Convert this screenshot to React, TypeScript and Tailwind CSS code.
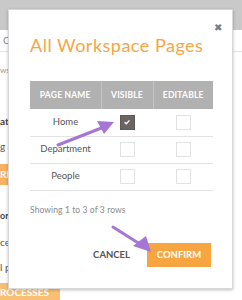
import React from "react";

const rows = [
  { name: "Home", visible: true, editable: false },
  { name: "Department", visible: false, editable: false },
  { name: "People", visible: false, editable: false },
];

function Box({ checked }: { checked: boolean }) {
  return checked ? (
    <span className="flex h-[15px] w-[15px] items-center justify-center border border-[#5f5856] bg-[#6b6462]">
      <svg viewBox="0 0 10 10" className="h-[8px] w-[8px]">
        <path d="M2 5.2 L4.2 7.2 L8 3" fill="none" stroke="#fff" strokeWidth="1.6" />
      </svg>
    </span>
  ) : (
    <span className="block h-[15px] w-[15px] border border-[#e2e2e2] bg-white" />
  );
}

export default function App() {
  return (
    <div
      className="relative h-[300px] w-[242px] overflow-hidden bg-white"
      style={{ fontFamily: "Lato, 'Open Sans', sans-serif" }}
    >
      {/* page behind the dialog */}
      <div className="h-[30px] w-full bg-[#c9c9c9]" />
      <div className="flex h-[22px] items-center border-b border-[#e4e4e4] pl-[3px] text-[10px] text-[#888]">C</div>
      <div className="mt-[12px] text-[8px] text-[#999]">ws</div>
      <div className="mt-[38px] text-[10px] font-bold text-[#444]">ati</div>
      <div className="mt-[10px] text-[10px] text-[#555]">g a</div>
      <div className="mt-[10px] flex h-[21px] w-[40px] items-center bg-[#f7b160] text-[10px] font-bold text-white">RE</div>
      <div className="mt-[24px] text-[9px] font-bold text-[#444]">or</div>
      <div className="mt-[12px] text-[10px] text-[#555]">ce</div>
      <div className="mt-[10px] text-[10px] text-[#555]">l p</div>
      <div className="mt-[8px] flex h-[20px] w-[60px] items-center bg-[#f9bf74] text-[10px] font-bold text-white">ROCESSES</div>

      {/* dialog */}
      <div className="absolute left-[8px] top-[9px] flex h-[280px] w-[225px] flex-col border border-[#d8d8d8] bg-white px-[21px] shadow-[0_1px_3px_rgba(0,0,0,0.25)]">
        <div className="flex justify-end pt-[12px]">
          <span className="mr-[-11px] text-[10px] leading-none text-[#7a7a7a]">✖</span>
        </div>
        <h2 className="mt-[2px] whitespace-nowrap text-[18px] leading-[22px] tracking-[0.5px] text-[#f5a545]">
          All Workspace Pages
        </h2>

        <table className="mt-[25px] w-[183px] border-collapse text-[9.5px] text-[#555]">
          <thead>
            <tr className="h-[28px] bg-[#b1b1b1] text-[8.5px] font-bold tracking-[0.2px] text-white">
              <th className="w-[71px] border-r border-[#c4c4c4] font-bold">PAGE NAME</th>
              <th className="w-[52px] border-r border-[#c4c4c4] font-bold">VISIBLE</th>
              <th className="font-bold">EDITABLE</th>
            </tr>
          </thead>
          <tbody>
            {rows.map((r) => (
              <tr key={r.name} className="h-[27px] border-b border-[#e3e3e3]">
                <td className="text-center">{r.name}</td>
                <td>
                  <div className="flex justify-center">
                    <Box checked={r.visible} />
                  </div>
                </td>
                <td>
                  <div className="flex justify-center">
                    <Box checked={r.editable} />
                  </div>
                </td>
              </tr>
            ))}
          </tbody>
        </table>

        <p className="mt-[13px] text-[8.5px] tracking-[0.1px] text-[#8a8a8a]">Showing 1 to 3 of 3 rows</p>

        <div className="mt-[27px] flex items-center justify-end gap-[17px]">
          <span className="text-[9.5px] font-bold text-[#555]">CANCEL</span>
          <span className="flex h-[24px] w-[64px] items-center justify-center bg-[#f7a540] text-[9.5px] font-bold text-white">
            CONFIRM
          </span>
        </div>
      </div>

      {/* annotation arrows */}
      <svg className="pointer-events-none absolute left-0 top-0" width="242" height="300" viewBox="0 0 242 300">
        <g fill="#a676d6" stroke="#a676d6" strokeLinecap="round">
          <line x1="58" y1="145" x2="104" y2="127" strokeWidth="3" />
          <polygon points="114,122 97,121 104,134" stroke="none" />
          <line x1="113" y1="227" x2="143" y2="246" strokeWidth="3" />
          <polygon points="151,252 133,246 146,236" stroke="none" />
        </g>
      </svg>
    </div>
  );
}
